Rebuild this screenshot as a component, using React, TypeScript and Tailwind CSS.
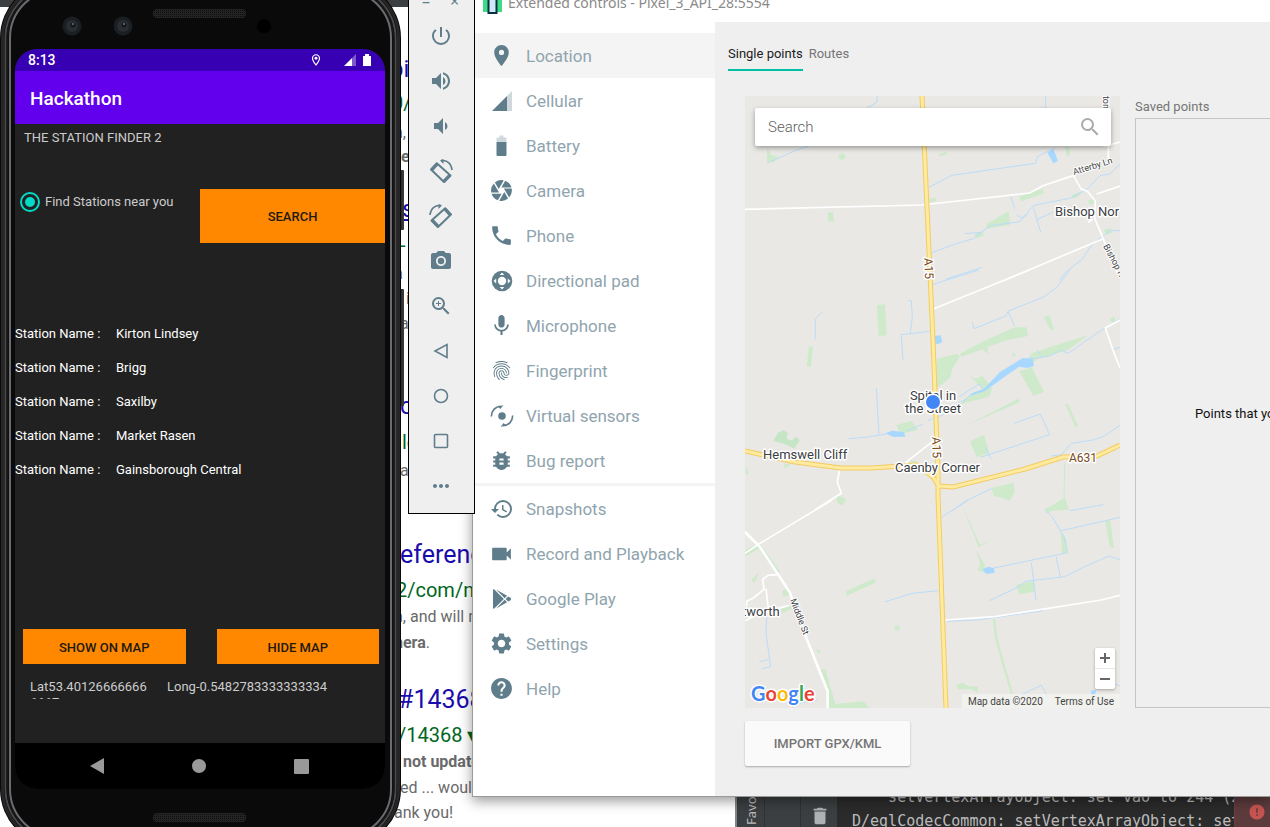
import type { ReactNode } from "react";
import {
  MdLocationOn, MdCamera, MdPhone, MdMic, MdFingerprint, MdBugReport, MdHistory, MdVideocam,
  MdSettings, MdHelp, MdPowerSettingsNew, MdVolumeUp, MdVolumeDown, MdPhotoCamera, MdZoomIn,
  MdMoreHoriz, MdSearch, MdDelete, MdError, MdOutlineLocationOn,
} from "react-icons/md";
import { FaGooglePlay } from "react-icons/fa";

/* ---------- small icons ---------- */

const CellularIcon = () => (
  <svg width="22" height="22" viewBox="0 0 22 22" fill="#607d8b">
    <path d="M1 21 16 6v15z" />
    <path d="M16 6l5-5v20h-5z" opacity=".3" />
  </svg>
);

const BatteryIcon = () => (
  <svg width="22" height="22" viewBox="0 0 22 22" fill="#607d8b">
    <path d="M5.500 7V3.500q0-1 1-1h2V.5h4v2h2q1 0 1 1V7z" opacity=".3" />
    <path d="M5.500 7h10v13q0 1-1 1h-8q-1 0-1-1z" />
  </svg>
);

const DpadIcon = () => (
  <svg width="22" height="22" viewBox="0 0 22 22">
    <circle cx="11" cy="11" r="10.300" fill="#607d8b" />
    <circle cx="11" cy="11" r="4.200" fill="#fff" />
    <g fill="#fff">
      <path d="M11 2.500 13.300 5H8.700z" />
      <path d="M11 19.500 8.700 17h4.600z" />
      <path d="M2.500 11 5.200 8.500v5z" />
      <path d="M19.500 11l-2.700 2.500v-5z" />
    </g>
  </svg>
);

const SensorsIcon = () => (
  <svg width="24" height="24" viewBox="0 0 24 24" fill="none" stroke="#607d8b" strokeWidth="1.600">
    <circle cx="12" cy="12" r="3.800" fill="#607d8b" stroke="none" />
    <path d="M1.300 12.500C1.500 7 5 2.500 11 2.200" />
    <path d="M22.700 11.500C22.500 17 19 21.500 13 21.800" />
    <path d="M13.500.800 10.500 5 8.500 3.200z" fill="#607d8b" stroke="none" />
    <path d="M10.500 23.200l3-4.200 2 1.800z" fill="#607d8b" stroke="none" />
  </svg>
);

const RotateIcon = ({ flip = false }: { flip?: boolean }) => (
  <svg width="26" height="26" viewBox="0 0 26 26" className={flip ? "-scale-x-100" : ""}>
    <path d="M3 11.500 8.800 5.300 22.500 17.500 16 24z" fill="none" stroke="#607d8b" strokeWidth="2" strokeLinejoin="round" />
    <path d="M2.200 11.500l6-6.500 2.200 1.900L4.500 13.500zM14.500 22.500l6.200-6.500 2.600 2.100L16.500 25z" fill="#607d8b" />
    <path d="M13 2.600C19 1.800 23.500 5.500 24 12" fill="none" stroke="#607d8b" strokeWidth="1.500" />
    <path d="M12 2.600 15.500 1v5z" fill="#607d8b" />
  </svg>
);

const BackIcon = () => (
  <svg width="18" height="18" viewBox="0 0 18 18" fill="none" stroke="#607d8b" strokeWidth="1.600">
    <path d="M15 2.500v13L3 9z" />
  </svg>
);
const HomeIcon = () => (
  <svg width="18" height="18" viewBox="0 0 18 18" fill="none" stroke="#607d8b" strokeWidth="1.600">
    <circle cx="9" cy="9" r="6.500" />
  </svg>
);
const SquareIcon = () => (
  <svg width="18" height="18" viewBox="0 0 18 18" fill="none" stroke="#607d8b" strokeWidth="1.600">
    <rect x="2.500" y="2.500" width="13" height="13" rx="1" />
  </svg>
);

/* ---------- background windows ---------- */

function SearchPage() {
  return (
    <section className="absolute top-[7px] left-0 h-full w-[735px] overflow-hidden bg-white pl-[400px] font-['Roboto',sans-serif] text-base leading-[25px] whitespace-nowrap text-[#6a6a6a]">
      <div className="flex h-[526px] flex-col pt-[46px]">
        <a href="#a" className="-ml-2.5 text-2xl leading-8 text-[#1a0dab]">pi</a>
        <span className="-ml-2 text-xl leading-9 text-[#006621]">0/</span>
        <span className="-ml-1.5 leading-6">n,</span>
        <b className="-ml-2 leading-6">ne</b>
        <a href="#b" className="mt-5 ml-0.5 text-2xl leading-10 text-[#1a0dab] underline">s</a>
        <span className="text-xl leading-8 text-[#006621]">-</span>
        <span className="-ml-1.5">n</span>
        <span className="ml-1.5">in</span>
        <span>a</span>
        <a href="#c" className="mt-[50px] text-2xl leading-10 text-[#1a0dab]">c</a>
        <span className="ml-0.5 text-xl leading-8 text-[#006621]">le</span>
        <span>a</span>
      </div>
      <div className="flex flex-col">
        <a href="#d" className="text-[25px] leading-[44px] text-[#1a0dab]">eferences</a>
        <span className="-ml-1 text-xl leading-[26px] text-[#006621]">2/com/map</span>
        <span className="-ml-1.5 leading-7">n, and will not</span>
        <span className="-ml-1.5 leading-[23px]"><b>nera</b>.</span>
        <a href="#e" className="mt-6 -ml-0.5 text-[25px] leading-[44px] text-[#1a0dab]">#14368</a>
        <span className="-ml-0.5 text-xl leading-[26px] text-[#006621]">/14368 ▾</span>
        <b className="ml-[3px] leading-7">not updated</b>
        <span className="leading-[23px]">ed ... would</span>
        <span className="-ml-1.5 leading-7">ank you!</span>
      </div>
    </section>
  );
}

function IdeWindow() {
  return (
    <section className="absolute top-[785px] right-0 bottom-0 left-[735px] flex border-l-2 border-[#858585] bg-[#3c3f41] text-[#bbbbbb]">
      <div className="flex w-7 justify-center border-r border-[#2f3133]">
        <span className="h-10 rotate-180 font-['Noto_Sans',sans-serif] text-[13px] leading-4 [writing-mode:vertical-rl]">Favor</span>
      </div>
      <div className="w-9 border-r border-[#2f3133]" />
      <div className="flex w-9 justify-center pt-5 pl-0.5">
        <MdDelete size={22} color="#afb1b3" />
      </div>
      <pre className="flex-1 overflow-hidden bg-[#2b2b2b] pl-[15px] font-['DejaVu_Sans_Mono',monospace] text-[15px] leading-6 text-[#bbbbbb]">
        {"    setVertexArrayObject: set vao to 244 (2\n"}
        {"D/eglCodecCommon: setVertexArrayObject: set"}
      </pre>
      <div className="flex w-9 justify-center border-l border-[#743a3a] bg-[#5c3b3d] pt-[18px] pl-2">
        <MdError size={18} color="#c75450" />
      </div>
    </section>
  );
}

/* ---------- map ---------- */

const HALO = "fill-[#3c4043] stroke-white [paint-order:stroke] [stroke-linejoin:round]";
const ROAD_HALO = "fill-[#7a4a1a] stroke-white [paint-order:stroke] [stroke-linejoin:round]";

function MapDrawing() {
  return (
    <svg viewBox="0 0 375 612" className="block h-[612px] w-[375px] font-['Roboto',sans-serif]" role="img" aria-label="Map">
      <rect width="375" height="612" fill="#e9e8e5" />
      {/* northern part */}
      <g transform="translate(-25 -76) scale(.33333)">
        <g fill="#ceeacb">
          <path d="M141 384l14 22 20 5-12 16-22-1z" />
          <path d="M356 404l14-4 8 10-10 10-12-4z" />
          <path d="M656 403l24-8 2 8-22 6z" />
          <path d="M323 578l16-2 2 28-16 2z" />
          <path d="M626 536l22-2v10l-22 1z" />
          <path d="M896 530l72-24 4 14-68 24z" />
          <path d="M800 612l66-38 4 40-72 12z" />
          <path d="M765 642l20-8 8 12-26 10z" />
          <path d="M1035 380l12 0 4 26-10 2z" />
          <path d="M1055 526l28-12-8 16-18 6z" />
          <path d="M1104 542l16-6 4 14-14 4z" />
          <path d="M1152 630l20-6 4 14-18 6z" />
        </g>
        <path d="M982 398l18-10 14 34-14 8z" fill="#a8d8ff" />
        <g fill="none" stroke="#bbdcf8" strokeWidth="3">
          <path d="M472 228l-3 20-30 17M977 228v36l-46 4M141 430l84-38 48-16" />
          <path d="M626 502l70-36 250-36 8-22 52-24" />
          <path d="M1200 432l-30 30-30 5-40 42-50 26-74 14-36 8-40 48-88 12-28 20-50 4M790 632l-30 24-54 16-70 26" />
          <path d="M872 528l12 38M940 562l22 74M1000 576l-48 22M890 584l14 10 18-10" />
          <path d="M1200 632l-30 0-56 44-26 40-50 40-20 26M676 778l110-36" />
        </g>
        <g fill="none" stroke="#fff" strokeWidth="5">
          <path d="M75 568l530-13 324-36 40-22 90-30M1060 466l24 42 18 6 24 30-2 50 70 170" />
          <path d="M1165 228v190M1200 366l-50 14M1200 498l-70 24M1150 656l-300 126M1104 608l14-10" />
        </g>
      </g>
      {/* central part */}
      <g transform="translate(-5 174) scale(.33333)">
        <g fill="#ceeacb">
          <path d="M411 106l24-4 5 94-24 2z" />
          <path d="M206 230l13-1-6 62-13-2z" />
          <path d="M590 266l62-14 8 8-22 34-8 30-42 32z" />
          <path d="M662 250l72-38 90-40 36 0 4 26-70 14-52 20 2 20-18-14-24 10-40 12z" />
          <path d="M911 142l18-8 12 44-8 4z" />
          <path d="M1110 146l16-6v16l-12 0z" />
          <path d="M870 252l62-22 112-34-60 44-90 26-16 12z" />
          <path d="M838 304l38-12 36 74-32 12z" />
          <path d="M690 318l18 8 20-8 28 38-8 24-92 24 44-36 30-10z" />
          <path d="M680 466l120-62 34-18 6 10z" />
          <path d="M468 466l46-14 20 28-52 12z" />
          <path d="M690 514l42-20 16 54-38 14z" />
          <path d="M976 402l8 0 30 66-8 4z" />
          <path d="M754 654l66-16 4 26-14 28-30-10-18-4z" />
          <path d="M913 722l62-40 12 38z" />
          <path d="M132 580l20 4-18 14zM16 586l12 30-12-6z" />
          <path d="M290 676l28 10-14 20-14-10z" />
          <path d="M510 570l20 4-16 16zM816 246l12 8-8 8z" />
        </g>
        <path d="M100 512l14-24 18-8 12 10-4 16 16 6 10-12 14 10-18 26-22-12z" fill="#c5e6c5" />
        <g fill="#a8d8ff">
          <path d="M582 198l20-2 5 20-14 7-12-4z" />
          <path d="M662 398l34-28 36-14 48-50 68-42 30 2 4 22-20 6-24-4-46 32-58 42-46 14-16 16z" />
          <path d="M436 490l20-8 36 4 4 14-36 1z" />
        </g>
        <g fill="none" stroke="#bbdcf8" strokeWidth="3">
          <path d="M246 126l-20 22v60M505 92h9l3 50-6 46M568 184l-84 10 5 76M409 354l8 140M576 44l140-44" />
          <path d="M990 0l-40 52-38 28-108 44-6 14-96 38-6-20M804 124l20 44" />
          <path d="M1140 146l-70 44-86 60-22-10-32 18-46 8-20-4M890 240l14 20" />
          <path d="M326 506l50-4 64-10M496 484l54-22M564 452l50-20 50-40M658 380l60-38 12 18" />
          <path d="M823 460l78-28 28 62-208 68M736 532l18 36" />
          <path d="M1140 466l-50 34-30 10-66 10-30 34-30 4M1120 238l20-6M636 722l36-26 82-40" />
        </g>
        <path d="M974 580l-2 120" fill="none" stroke="#ceeacb" strokeWidth="3" />
        <g fill="none" stroke="#fff" strokeWidth="5">
          <path d="M578 118L868 0M1140 150l-44 24 22 64 22 56M578 514l-84 66M298 602l-6 34 12 34-80 50" />
        </g>
      </g>
      {/* southern part */}
      <g transform="translate(-5 404) scale(.33333)">
        <g fill="#ceeacb">
          <path d="M15 150l44-20 62 86-16 0-50-70-40 24z" />
          <path d="M128 272l22-10 0 24-22 2zM120 328l36-12v10l-30 14z" />
          <path d="M34 240l22-22-4 14-10 18z" />
          <path d="M318 274l82-38 10 10-90 42z" />
          <path d="M462 378l14-2 4 12-14 4zM230 450l8-2 4 10-10 2z" />
          <path d="M242 508l14 0 30 104 86-8 14 20H264v-50z" />
          <path d="M666 14l54 120 30-12-34 20zM708 152l28 44-8 20-14-4 6-22z" />
          <path d="M828 256l54-14 0 34-44 6z" />
          <path d="M962 96l16 20 6 42-18 2zM1096 64l14-4 12 84-12-2z" />
          <path d="M648 554l20-6 16 10 30 2 0 18-20-10-40 0z" />
          <path d="M913 28l60-28 10 34-8-20-54 26zM290 0h30l-14 16z" />
        </g>
        <path d="M762 356l6 56 18 66 32 110" fill="none" stroke="#ceeacb" strokeWidth="7" />
        <g fill="#a8d8ff">
          <path d="M730 206l14-6 18 4 2 14-24 4-10-8z" />
          <path d="M1052 572l16-2-2 14-12 0z" />
        </g>
        <g fill="none" stroke="#bbdcf8" strokeWidth="3">
          <path d="M434 306l82-26 80-8M604 52l82-52M916 30l20 20 36 60 10 48-220 46M964 92l176-40M990 32l100-18" />
          <path d="M748 302l80-38 30-20 116-14 60-30 74-32 32 12M874 188l14 112M948 170l14 62" />
          <path d="M80 350l-2 50 14 100-26 6M58 486l28-8M620 364l90-4 200-28M840 586l64-30 18 34M1126 552l14 6M160 624l-4-10 76-14" />
        </g>
        <g fill="none" stroke="#fff" strokeWidth="5">
          <path d="M276 0L60 130l-45 30M614 360l150-10 320-50 56-14" />
          <path d="M16 362l42-22 90-24M20 318l0-14 20-10 32-26-4-30 16-12 30-2M78 266l6 54" />
          <path d="M15 96l44 44 90 136 50 138 64 160v50" strokeWidth="8" />
        </g>
      </g>
      {/* main roads */}
      <g fill="none" strokeLinejoin="round" strokeWidth="5" stroke="#f3cb62">
        <path d="M177 0l11 244 5 130v26l8 212" />
        <path d="M0 355l50 11 46 6 30 0 46-3 16 12 6 9 14 1 72-18 38-12 34-1 23-11" />
      </g>
      <g fill="none" strokeLinejoin="round" strokeWidth="3" stroke="#ffeba0">
        <path d="M177 0l11 244 5 130v26l8 212" />
        <path d="M0 355l50 11 46 6 30 0 46-3 16 12 6 9 14 1 72-18 38-12 34-1 23-11" />
      </g>
      <g fontSize="13" strokeWidth="3">
        <text x="310" y="120" className={HALO}>Bishop Nor</text>
        <text x="188" y="304" textAnchor="middle" className={HALO}>Spital in</text>
        <text x="188" y="317" textAnchor="middle" className={HALO}>the Street</text>
        <text x="18" y="363" className={HALO}>Hemswell Cliff</text>
        <text x="150" y="376" className={HALO}>Caenby Corner</text>
        <text x="-3" y="520" className={HALO}>tworth</text>
      </g>
      <g fontSize="12" strokeWidth="3">
        <text transform="translate(179 162) rotate(87)" className={ROAD_HALO}>A15</text>
        <text transform="translate(187 341) rotate(88)" className={ROAD_HALO}>A15</text>
        <text x="324" y="366" className={ROAD_HALO}>A631</text>
      </g>
      <g fontSize="9" strokeWidth="2">
        <text transform="translate(329 79) rotate(-17)" className={HALO}>Atterby Ln</text>
        <text transform="translate(358 0) rotate(90)" className={HALO}>ton</text>
        <text transform="translate(358 150) rotate(62)" className={HALO}>Bishop N</text>
        <text transform="translate(45 504) rotate(69)" className={HALO}>Middle St</text>
      </g>
      <circle cx="188" cy="306" r="8.500" fill="#fff" />
      <circle cx="188" cy="306" r="7" fill="#4285f4" />
      <text x="6" y="605" fontSize="20" strokeWidth="3" className="stroke-white font-['Lato',sans-serif] font-bold [paint-order:stroke] [stroke-linejoin:round]">
        <tspan fill="#4285f4">G</tspan><tspan fill="#ea4335">o</tspan><tspan fill="#fbbc05">o</tspan>
        <tspan fill="#4285f4">g</tspan><tspan fill="#34a853">l</tspan><tspan fill="#ea4335">e</tspan>
      </text>
    </svg>
  );
}

function MapView() {
  return (
    <div className="relative w-[375px] overflow-hidden">
      <MapDrawing />
      <label className="absolute top-3 right-[9px] left-2.5 flex h-[38px] items-center rounded-[2px] bg-white px-[13px] shadow-[0_2px_5px_rgba(0,0,0,0.35)]">
        <input type="text" aria-label="Search" placeholder="Search" className="min-w-0 flex-1 font-['Roboto',sans-serif] text-[15px] font-light outline-none placeholder:text-[#606060]" />
        <MdSearch size={24} color="#aaaaaa" className="-mr-1" />
      </label>
      <div className="absolute right-[5px] bottom-[19px] flex w-5 flex-col rounded-[2px] bg-white shadow-[0_1px_3px_rgba(0,0,0,0.3)]">
        <button aria-label="Zoom in" className="flex h-[21px] items-center justify-center border-b border-[#e6e6e6]">
          <svg width="10" height="10" viewBox="0 0 10 10" fill="#666"><path d="M4 0h2v4h4v2H6v4H4V6H0V4h4z" /></svg>
        </button>
        <button aria-label="Zoom out" className="flex h-5 items-center justify-center">
          <svg width="10" height="10" viewBox="0 0 10 10" fill="#666"><path d="M0 4h10v2H0z" /></svg>
        </button>
      </div>
      <div className="absolute right-0 bottom-0 flex h-3.5 items-center gap-3 bg-[#f2f2f0]/80 px-1.5 font-['Roboto',sans-serif] text-[10px] text-[#444444]">
        <span>Map data ©2020</span>
        <a href="#terms">Terms of Use</a>
      </div>
    </div>
  );
}

/* ---------- extended controls window ---------- */

const MENU: [string, ReactNode][] = [
  ["Location", <MdLocationOn size={25} />],
  ["Cellular", <CellularIcon />],
  ["Battery", <BatteryIcon />],
  ["Camera", <MdCamera size={25} />],
  ["Phone", <MdPhone size={25} />],
  ["Directional pad", <DpadIcon />],
  ["Microphone", <MdMic size={25} />],
  ["Fingerprint", <MdFingerprint size={23} />],
  ["Virtual sensors", <SensorsIcon />],
  ["Bug report", <MdBugReport size={25} />],
  ["Snapshots", <MdHistory size={24} />],
  ["Record and Playback", <MdVideocam size={26} />],
  ["Google Play", <FaGooglePlay size={20} />],
  ["Settings", <MdSettings size={25} />],
  ["Help", <MdHelp size={25} />],
];

function ExtendedControls() {
  return (
    <section className="absolute -top-3 right-0 left-[472px] flex h-[809px] flex-col border-b border-l border-[#9a9a9a] bg-white font-['Roboto',sans-serif] shadow-[0_4px_12px_rgba(0,0,0,0.4)]">
      <header className="flex h-[34px] shrink-0 items-center gap-1.5 pl-2.5">
        <svg width="19" height="20" viewBox="0 0 19 20">
          <rect x="0" y="2" width="19" height="15" fill="#3ddc84" />
          <rect x="5.500" y="1" width="8" height="17" fill="#cfe8f7" stroke="#073042" strokeWidth="2" />
        </svg>
        <h1 className="-mt-1 font-['Noto_Sans',sans-serif] text-sm text-[#8a8a8a]">Extended controls - Pixel_3_API_28:5554</h1>
      </header>
      <div className="flex min-h-0 flex-1">
        <nav className="w-[242px] shrink-0 pt-[11px]">
          {MENU.map(([label, icon], i) => (
            <div key={label}>
              {i === 10 && <hr className="h-[3px] border-0 bg-[#f4f4f4]" />}
              <button className={`flex h-[45px] w-full items-center pl-4 text-[17px] text-[#90a4ae] ${i === 0 ? "bg-[#f4f4f4]" : ""}`}>
                <span className="flex w-[25px] justify-center text-[#607d8b]">{icon}</span>
                <span className="ml-3 pt-0.5">{label}</span>
              </button>
            </div>
          ))}
        </nav>
        <main className="flex min-w-0 flex-1 flex-col overflow-hidden bg-[#efefef] pl-[13px] text-[13px]">
          <div className="flex h-[49px] gap-1.5" role="tablist">
            <button role="tab" aria-selected="true" className="border-b-2 border-[#00bfa5] pt-4 text-[#212121]">
              Single points
            </button>
            <button role="tab" className="border-b-2 border-transparent pt-4 text-[#757575]">Routes</button>
          </div>
          <div className="mt-[25px] flex gap-[15px] pl-[17px]">
            <MapView />
            <div className="flex min-w-0 flex-1 flex-col">
              <h2 className="h-[22px] leading-[22px] text-[#757575]">Saved points</h2>
              <div className="flex flex-1 items-center overflow-hidden border border-r-0 border-[#c4c4c4] pt-0.5 pl-[59px] whitespace-nowrap text-[#111111]">
                Points that you save
              </div>
            </div>
          </div>
          <button className="mt-[13px] ml-[17px] h-[45px] w-[165px] rounded-[2px] bg-[#fafafa] font-medium text-[#757575] shadow-[0_1px_2px_rgba(0,0,0,0.3)]">
            IMPORT GPX/KML
          </button>
        </main>
      </div>
    </section>
  );
}

/* ---------- emulator toolbar ---------- */

const TOOLS: [string, ReactNode][] = [
  ["Power", <MdPowerSettingsNew size={24} />],
  ["Volume up", <MdVolumeUp size={24} />],
  ["Volume down", <MdVolumeDown size={24} />],
  ["Rotate left", <RotateIcon />],
  ["Rotate right", <RotateIcon flip />],
  ["Take screenshot", <MdPhotoCamera size={24} />],
  ["Zoom", <MdZoomIn size={24} />],
  ["Back", <BackIcon />],
  ["Home", <HomeIcon />],
  ["Overview", <SquareIcon />],
  ["More", <MdMoreHoriz size={24} />],
];

function EmulatorToolbar() {
  return (
    <aside className="absolute -top-3 left-[408px] flex w-[67px] flex-col border border-black bg-[#efefef] pr-0.5 pb-[5px] text-[#607d8b]">
      <div className="flex h-6 justify-center gap-5 text-base leading-5">
        <button aria-label="Minimize">–</button>
        <button aria-label="Close">×</button>
      </div>
      {TOOLS.map(([label, icon]) => (
        <button key={label} aria-label={label} className="flex h-[45px] items-center justify-center">{icon}</button>
      ))}
    </aside>
  );
}

/* ---------- phone ---------- */

const STATIONS = ["Kirton Lindsey", "Brigg", "Saxilby", "Market Rasen", "Gainsborough Central"];

function PhoneHardware() {
  return (
    <svg className="absolute inset-0 h-full w-full" viewBox="0 0 404 867">
      <defs>
        <linearGradient id="edge" x1="0" x2="1">
          <stop offset="0" stopColor="#1b1b1b" />
          <stop offset="1" stopColor="#3d3d3f" />
        </linearGradient>
        <pattern id="mesh" width="2" height="2" patternUnits="userSpaceOnUse">
          <rect width="2" height="2" fill="#242424" />
          <rect width="1" height="1" fill="#0d0d0d" />
        </pattern>
      </defs>
      <rect x="398" y="190" width="6" height="60" rx="1" fill="url(#edge)" />
      <rect x="398" y="309" width="6" height="117" rx="1" fill="url(#edge)" />
      <rect x="0" y="0" width="401" height="867" rx="58" fill="#0a0a0a" />
      <g fill="none">
        <rect x="2.500" y="2.500" width="396" height="862" rx="56" stroke="#262627" strokeWidth="3" />
        <rect x="5.500" y="5.500" width="390" height="856" rx="53" stroke="#4a4a4d" strokeWidth="2" />
        <rect x="7.500" y="7.500" width="386" height="852" rx="51" stroke="#161616" strokeWidth="2" />
        <rect x="10" y="10" width="381" height="847" rx="48" stroke="#6b6b71" strokeWidth="2" />
      </g>
      {[72, 123].map((x) => (
        <g key={x}>
          <circle cx={x} cy="46" r="9.500" fill="#1a1f24" />
          <circle cx={x} cy="46" r="6" fill="#2a2d31" />
          <circle cx={x + 1} cy="45" r="2.500" fill="#15181b" />
          <circle cx={x + 1} cy="44" r="1" fill="#6d7278" />
        </g>
      ))}
      <circle cx="264" cy="46" r="7" fill="#000" />
      <rect x="153" y="29" width="93" height="9" rx="4" fill="url(#mesh)" />
      <rect x="153" y="833" width="93" height="9" rx="4" fill="url(#mesh)" />
    </svg>
  );
}

function Phone() {
  return (
    <section className="absolute -top-5 left-0 w-[404px] pt-[69px] pr-[19px] pb-[58px] pl-[15px] font-['Roboto',sans-serif]">
      <PhoneHardware />
      <div className="relative flex h-[740px] flex-col overflow-hidden rounded-[22px] bg-[#212121] text-[13px] text-[#cccccc]">
        <div className="flex h-[22px] shrink-0 items-center bg-[#3700b3] pr-3.5 pl-[13px] text-sm font-medium text-white">
          <span className="flex-1">8:13</span>
          <MdOutlineLocationOn size={14} className="mr-[21px]" />
          <svg width="12" height="12" viewBox="0 0 12 12" className="mr-[7px]" fill="#fff">
            <path d="M0 12 8 4v8z" /><path d="M8 4l4-4v12H8z" opacity=".35" />
          </svg>
          <svg width="8" height="12" viewBox="0 0 8 12" fill="#fff"><path d="M0 2h2V0h4v2h2v10H0z" /></svg>
        </div>
        <h1 className="h-[53px] shrink-0 bg-[#6200ee] px-[15px] text-[19px] leading-[55px] font-medium text-white">Hackathon</h1>
        <p className="h-[65px] shrink-0 px-[9px] pt-1 leading-5">THE STATION FINDER 2</p>
        <div className="flex shrink-0 justify-between pl-[5px]">
          <label className="flex h-[26px] items-center gap-[5px]">
            <input type="radio" name="mode" defaultChecked className="size-5 appearance-none rounded-full border-2 border-[#03dac5] bg-[#03dac5] bg-clip-content p-[3px]" />
            Find Stations near you
          </label>
          <button className="h-[54px] w-[185px] bg-[#ff8800] pt-px font-medium text-[#211a10]">SEARCH</button>
        </div>
        <table className="mt-[74px] w-full shrink-0 border-collapse text-white">
          <tbody>
            {STATIONS.map((s) => (
              <tr key={s} className="h-[34px]">
                <td className="w-[101px] p-0">Station Name :</td>
                <td className="p-0">{s}</td>
              </tr>
            ))}
          </tbody>
        </table>
        <div className="mt-auto flex shrink-0 gap-[31px] px-2 pr-1.5">
          <button className="h-[35px] flex-1 bg-[#ff8800] pt-0.5 font-medium text-[#211a10]">SHOW ON MAP</button>
          <button className="h-[35px] flex-1 bg-[#ff8800] pt-0.5 font-medium text-[#211a10]">HIDE MAP</button>
        </div>
        <div className="mt-[15px] mb-11 flex h-5 shrink-0 gap-[17px] overflow-hidden pl-[15px] leading-4">
          <span className="w-[120px] break-all">Lat53.401266666666667</span>
          <span>Long-0.5482783333333334</span>
        </div>
        <div className="flex h-[46px] shrink-0 items-center justify-between bg-black pr-[76px] pl-[75px]">
          <button aria-label="Back"><svg width="14" height="16" viewBox="0 0 14 16"><path d="M14 0v16L0 8z" fill="#999" /></svg></button>
          <button aria-label="Home" className="size-3.5 rounded-full bg-[#999999]" />
          <button aria-label="Recents" className="size-[15px] rounded-[1px] bg-[#999999]" />
        </div>
      </div>
    </section>
  );
}

export default function App() {
  return (
    <div className="relative h-screen overflow-hidden bg-[#3c3f41]">
      <SearchPage />
      <IdeWindow />
      <ExtendedControls />
      <EmulatorToolbar />
      <Phone />
    </div>
  );
}
